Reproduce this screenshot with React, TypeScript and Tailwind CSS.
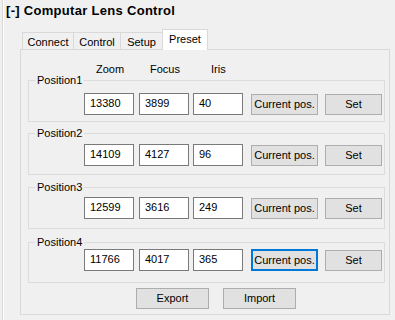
import React from "react";

const groups = [
  { name: "Position1", zoom: "13380", focus: "3899", iris: "40", pt: "pt-[12px]", h: "h-[42px]", mt: "mt-[4px]", focused: false },
  { name: "Position2", zoom: "14109", focus: "4127", iris: "96", pt: "pt-[10px]", h: "h-[42px]", mt: "mt-[11px]", focused: false },
  { name: "Position3", zoom: "12599", focus: "3616", iris: "249", pt: "pt-[9px]", h: "h-[42px]", mt: "mt-[12px]", focused: false },
  { name: "Position4", zoom: "11766", focus: "4017", iris: "365", pt: "pt-[6px]", h: "h-[41px]", mt: "mt-[13px]", focused: true },
];

function Field({ value, className = "" }: { value: string; className?: string }) {
  return (
    <div className={`w-[50px] h-[22px] border border-[#7a7a7a] bg-white pl-[5px] leading-[19px] ${className}`}>
      {value}
    </div>
  );
}

function Btn({ label, w, focused = false, className = "" }: { label: string; w: string; focused?: boolean; className?: string }) {
  return (
    <div
      className={`${w} h-[21px] bg-[#e1e1e1] flex items-center justify-center leading-[13px] ${
        focused ? "border-2 border-[#0078d7]" : "border border-[#adadad]"
      } ${className}`}
    >
      {label}
    </div>
  );
}

export default function App() {
  return (
    <div className="w-[395px] h-[320px] bg-[#f0f0f0] pl-[2px] font-['Liberation_Sans',Arial,sans-serif] text-[11px] text-black overflow-hidden">
      <div className="h-full border-l border-[#d9d9d9]">
        <div className="h-full border-l border-white">
          <div className="pl-[2px] pt-[3px] h-[19px] leading-[16px] font-bold text-[13px] tracking-[0.3px]">
            [-] Computar Lens Control
          </div>
          <div className="mt-[10px] ml-[18px] flex items-end h-[21px] -mb-px relative z-10">
            <div className="w-[51px] h-[18px] border-l border-t border-[#d9d9d9] flex items-center justify-center pt-[1px]">Connect</div>
            <div className="w-[47px] h-[18px] border-l border-t border-[#d9d9d9] flex items-center justify-center pt-[1px]">Control</div>
            <div className="w-[42px] h-[18px] border-l border-t border-[#d9d9d9] flex items-center justify-center pt-[1px]">Setup</div>
            <div className="w-[46px] h-[21px] border-l border-t border-r border-[#d9d9d9] bg-white flex items-center justify-center pb-[2px]">Preset</div>
          </div>
          <div className="ml-[16px] w-[370px] h-[266px] border border-[#d9d9d9]">
            <div className="mt-[13px] h-[13px] leading-[13px] flex">
              <div className="ml-[75px] w-[54px]">Zoom</div>
              <div className="w-[61px]">Focus</div>
              <div>Iris</div>
            </div>
            {groups.map((g) => (
              <div key={g.name} className={`${g.mt} ${g.h} ml-[7px] w-[357px] border border-[#dcdcdc] relative`}>
                <div className="absolute top-[-7px] left-[6px] px-[2px] bg-[#f0f0f0] leading-[13px]">{g.name}</div>
                <div className={`${g.pt} pl-[55px] flex items-start`}>
                  <Field value={g.zoom} />
                  <Field value={g.focus} className="ml-[5px]" />
                  <Field value={g.iris} className="ml-[4px]" />
                  <Btn label="Current pos." w="w-[67px]" focused={g.focused} className={`ml-[8px] ${g.focused ? "mt-0 h-[22px]" : "mt-[1px]"}`} />
                  <Btn label="Set" w="w-[57px]" className="ml-[7px] mt-[1px]" />
                </div>
              </div>
            ))}
            <div className="mt-[5px] flex pl-[115px]">
              <Btn label="Export" w="w-[73px]" />
              <Btn label="Import" w="w-[73px]" className="ml-[14px]" />
            </div>
          </div>
        </div>
      </div>
    </div>
  );
}
